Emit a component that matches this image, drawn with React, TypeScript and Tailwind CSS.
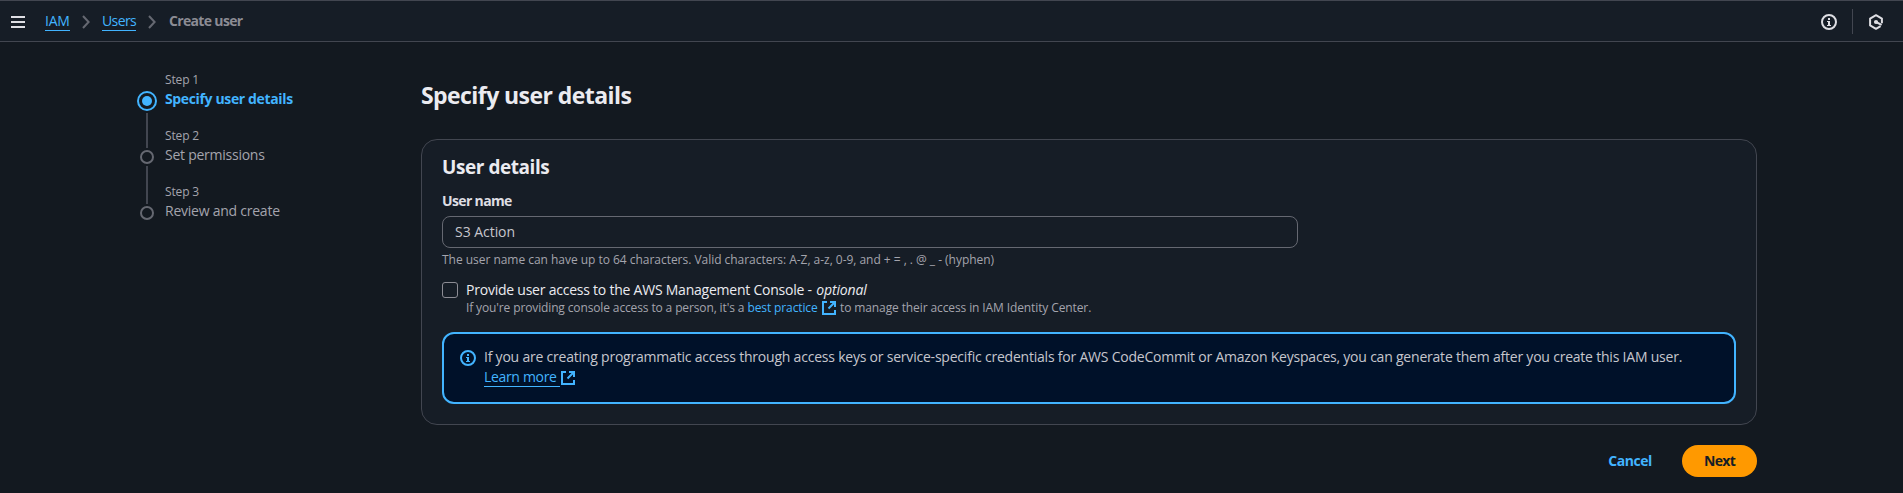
import type { ReactNode } from "react";

function InfoIcon({ className }: { className?: string }) {
  return (
    <svg viewBox="0 0 16 16" className={`block size-4 shrink-0 ${className ?? ""}`} fill="none" stroke="currentColor">
      <circle cx="8" cy="8" r="7" strokeWidth="2" />
      <path d="M7 4h2v2H7zM6 7h3v4h1v1H6v-1h1V8H6z" fill="currentColor" stroke="none" />
    </svg>
  );
}

function HexIcon() {
  return (
    <svg viewBox="0 0 16 16" className="block size-4 shrink-0" fill="none" stroke="currentColor" strokeWidth="2">
      <path d="M13.9 9.2V4.6L8 1.2 2.1 4.6v6.8L8 14.8l4.6-2.6" strokeLinejoin="round" />
      <path d="M8 8l5.6 2.9" />
      <circle cx="8" cy="8" r="2.1" fill="currentColor" stroke="none" />
    </svg>
  );
}

function ExternalIcon() {
  return (
    <svg viewBox="0 0 14 14" className="block size-3.5 shrink-0 text-[#42b4ff]" fill="none" stroke="currentColor" strokeWidth="2">
      <path d="M5 1H1v12h12V9" />
      <path d="M8 1h5v5M13 1L6.5 7.5" />
    </svg>
  );
}

function Chevron() {
  return (
    <svg viewBox="0 0 8 14" className="block h-3.5 w-2 shrink-0 text-[#656871]" fill="none" stroke="currentColor" strokeWidth="2">
      <path d="M1 1l5.6 6L1 13" />
    </svg>
  );
}

function Crumb({ children, className }: { children: ReactNode; className: string }) {
  return (
    <a href="#" className={`block h-[17px] border-b border-[#42b4ff] leading-5 whitespace-nowrap text-[#42b4ff] ${className}`}>
      <span className="-mt-[3px] block">{children}</span>
    </a>
  );
}

function Header() {
  return (
    <header className="flex h-[42px] items-start border-y border-[#424650] bg-[#161d26] text-[#dedee3]">
      <button type="button" aria-label="Open navigation" className="mt-[15px] ml-[11px] flex w-3.5 flex-col gap-[3px]">
        <span className="h-0.5 w-full bg-current" />
        <span className="h-0.5 w-full bg-current" />
        <span className="h-0.5 w-full bg-current" />
      </button>
      <nav className="ml-5 flex items-start">
        <div className="flex pt-[13px]">
          <Crumb className="w-[25px] tracking-[-0.28px]">IAM</Crumb>
        </div>
        <div className="mt-3.5 ml-3">
          <Chevron />
        </div>
        <div className="ml-3 flex pt-[13px]">
          <Crumb className="w-[34px] tracking-[-0.62px]">Users</Crumb>
        </div>
        <div className="mt-3.5 ml-3">
          <Chevron />
        </div>
        <span className="mt-2.5 ml-[13px] leading-5 font-bold tracking-[-0.66px] whitespace-nowrap text-[#8c8c94]">Create user</span>
      </nav>
      <div className="ml-auto flex items-start pr-[19px]">
        <InfoIcon className="mt-[13px]" />
        <span className="mt-2 ml-[15px] h-[25px] w-px bg-[#424650]" />
        <span className="mt-[13px] ml-[15px]">
          <HexIcon />
        </span>
      </div>
    </header>
  );
}

function Step({ label, title, active, last, className }: { label: string; title: string; active?: boolean; last?: boolean; className: string }) {
  return (
    <li className="flex h-14">
      <div className="flex w-5 flex-col items-center">
        {active ? (
          <span className="mt-5 flex size-5 shrink-0 items-center justify-center rounded-full border-2 border-[#42b4ff]">
            <span className="size-2.5 rounded-full bg-[#42b4ff]" />
          </span>
        ) : (
          <span className="mt-[23px] size-3.5 shrink-0 rounded-full border-2 border-[#656871]" />
        )}
        {!last && <span className="mt-0.5 -mb-[21px] w-0.5 flex-1 bg-[#424650]" />}
      </div>
      <div className="ml-2 pt-px whitespace-nowrap">
        <div className="text-xs leading-4 tracking-[-0.15px] text-[#a4a4ad]">{label}</div>
        <div className={`mt-px leading-5 ${className}`}>{title}</div>
      </div>
    </li>
  );
}

export default function App() {
  return (
    <div className="h-[493px] overflow-hidden bg-[#131920] font-['Open_Sans','Noto_Sans',sans-serif] text-sm text-[#c6c6cd]">
      <Header />
      <div className="flex">
        <ol className="mt-[29px] ml-[137px] w-[284px] shrink-0">
          <Step active label="Step 1" title="Specify user details" className="font-bold tracking-[-0.36px] text-[#42b4ff]" />
          <Step label="Step 2" title="Set permissions" className="tracking-[-0.25px] text-[#a4a4ad]" />
          <Step last label="Step 3" title="Review and create" className="tracking-[-0.24px] text-[#a4a4ad]" />
        </ol>
        <main className="mt-[38px] w-[1336px]">
          <h1 className="text-[23px] leading-[30px] font-bold tracking-[-0.57px] text-[#ebebf0]">Specify user details</h1>
          <section className="mt-[29px] h-[286px] rounded-2xl border border-[#424650] bg-[#161d26] px-5 pt-[15px]">
            <h2 className="text-[19px] leading-6 font-bold tracking-[-0.44px] text-[#ebebf0]">User details</h2>
            <label htmlFor="user-name" className="mt-3 block leading-5 font-bold tracking-[-0.64px] text-[#dedee3]">
              User name
            </label>
            <input
              id="user-name"
              defaultValue="S3 Action"
              className="mt-[5px] block h-8 w-[856px] rounded-lg border border-[#656871] bg-transparent px-3 pb-px tracking-[-0.04px] text-[#c6c6cd] outline-none"
            />
            <p className="mt-1 text-xs leading-4 tracking-[-0.03px] text-[#a4a4ad]">
              The user name can have up to 64 characters. Valid characters: A-Z, a-z, 0-9, and + = , . @ _ - (hyphen)
            </p>
            <div className="mt-3 flex">
              <span className="mt-0.5 size-4 shrink-0 rounded-[3px] border border-[#8c8c94]" />
              <div className="ml-2 whitespace-nowrap">
                <div className="leading-5 text-[#ebebf0]">
                  <span className="tracking-[-0.23px]">Provide user access to the AWS Management Console - </span>
                  <i className="ml-px tracking-[-0.15px]">optional</i>
                </div>
                <div className="flex h-4 items-start text-xs leading-4 text-[#a4a4ad]">
                  <span className="w-[281.5px] tracking-[-0.13px]">If you're providing console access to a person, it's a</span>
                  <a href="#" className="w-[74.5px] tracking-[-0.12px] text-[#42b4ff]">best practice</a>
                  <span className="mt-px">
                    <ExternalIcon />
                  </span>
                  <span className="ml-1 tracking-[-0.11px]">to manage their access in IAM Identity Center.</span>
                </div>
              </div>
            </div>
            <div className="mt-4 flex h-[72px] w-[1294px] rounded-xl border-2 border-[#42b4ff] bg-[#001129] pt-[13px] pl-4">
              <InfoIcon className="mt-[3px] text-[#42b4ff]" />
              <div className="ml-2 leading-5 whitespace-nowrap">
                <p className="tracking-[-0.214px]">
                  If you are creating programmatic access through access keys or service-specific credentials for AWS CodeCommit or Amazon Keyspaces, you can generate them after you create this IAM user.
                </p>
                <a href="#" className="flex items-start tracking-[-0.33px] text-[#42b4ff]">
                  <span className="h-5 w-[76px] border-b border-[#42b4ff]">Learn more</span>
                  <span className="mt-1 ml-px">
                    <ExternalIcon />
                  </span>
                </a>
              </div>
            </div>
          </section>
          <div className="mt-5 flex items-center justify-end">
            <button type="button" className="h-8 w-[86px] pb-px font-bold tracking-[-0.47px] text-[#42b4ff]">Cancel</button>
            <button type="button" className="ml-[9px] h-8 w-[75px] rounded-full bg-[#ff9900] pb-px font-bold tracking-[-0.7px] text-[#161d26]">Next</button>
          </div>
        </main>
      </div>
    </div>
  );
}
